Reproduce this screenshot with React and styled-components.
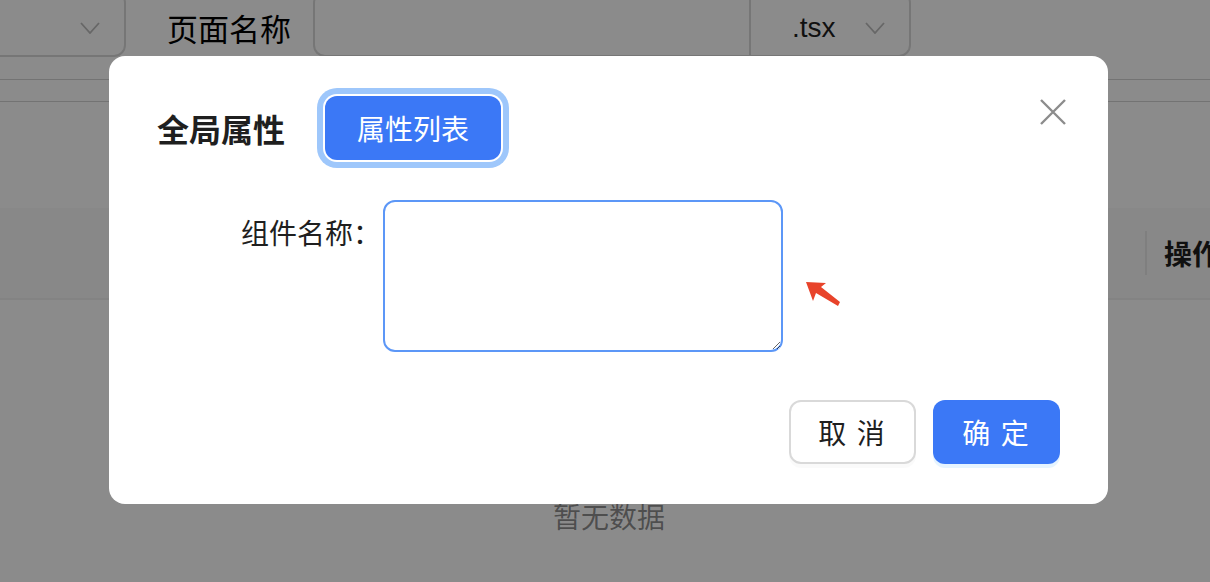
import styled, { createGlobalStyle } from "styled-components";

const GlobalStyle = createGlobalStyle`
  html, body {
    margin: 0;
    padding: 0;
    background: #fff;
    overflow: hidden;
  }
  body {
    font-family: "Liberation Sans", "Noto Sans CJK SC", sans-serif;
    color: #1f1f1f;
  }
  * { box-sizing: border-box; }
`;

const Page = styled.div`
  width: 1210px;
  height: 582px;
  overflow: hidden;
  position: relative;
  background: #fff;
`;

const TopBar = styled.div`
  display: flex;
  align-items: center;
  height: 66px;
  margin-top: -9px;
`;

const Select = styled.div`
  display: flex;
  align-items: center;
  justify-content: space-between;
  flex-shrink: 0;
  width: ${(p) => p.$width}px;
  height: 66px;
  margin-left: ${(p) => p.$offset || 0}px;
  padding: 0 24px 0 41px;
  border: 2px solid #d9d9d9;
  border-radius: ${(p) => (p.$attached ? "0 12px 12px 0" : "12px")};
  font-size: 28px;
  color: #1f1f1f;
  padding-top: 8px;
`;

const Chevron = ({ className }) => (
  <svg className={className} width="20" height="12" viewBox="0 0 20 12" fill="none">
    <path d="M1 1 L10 11 L19 1" stroke="#bdbdbd" strokeWidth="1.8" />
  </svg>
);

const PageLabel = styled.span`
  font-size: 31px;
  line-height: 40px;
  margin: 8px 22px 0 41px;
  color: #000;
  font-family: "Noto Sans CJK SC", sans-serif;
`;

const PageInput = styled.div`
  flex-shrink: 0;
  width: 436px;
  height: 66px;
  border: 2px solid #d9d9d9;
  border-right: none;
  border-radius: 12px 0 0 12px;
`;

const Rules = styled.div`
  margin-top: 22px;
  height: 23px;
  border-top: 1px solid #d4d4d4;
  border-bottom: 1px solid #d4d4d4;
`;

const TableHead = styled.div`
  margin-top: 106px;
  height: 92px;
  background: #fafafa;
  border-bottom: 2px solid #f0f0f0;
  display: flex;
  align-items: center;
  justify-content: flex-end;
`;

const HeadCell = styled.div`
  display: flex;
  align-items: center;
  height: 44px;
  padding-left: 17px;
  width: 65px;
  border-left: 2px solid #eaeaea;
  font-size: 28px;
  font-weight: 700;
  white-space: nowrap;
  overflow: hidden;
  font-family: "Noto Sans CJK SC", sans-serif;
`;

const Empty = styled.div`
  text-align: center;
  padding-top: 196px;
  font-size: 28px;
  line-height: 40px;
  color: rgba(0, 0, 0, 0.45);
  font-family: "Noto Sans CJK SC", sans-serif;
  padding-left: 8px;
`;

const Mask = styled.div`
  position: fixed;
  inset: 0;
  background: rgba(0, 0, 0, 0.455);
`;

const ModalWrap = styled.div`
  position: fixed;
  inset: 0;
  padding: 56px 0 0 109px;
`;

const Modal = styled.div`
  position: relative;
  width: 999px;
  background: #fff;
  border-radius: 16px;
  padding: 40px 48px 40px 48px;
  font-family: "Noto Sans CJK SC", sans-serif;
`;

const Header = styled.div`
  display: flex;
  align-items: center;
  gap: 40px;
  height: 64px;
`;

const Title = styled.h2`
  margin: 0;
  font-size: 32px;
  font-weight: 700;
  color: #1f1f1f;
  line-height: 44px;
`;

const TabButton = styled.button`
  height: 64px;
  padding: 0 32px;
  border: none;
  border-radius: 12px;
  background: #3b78f6;
  color: #fff;
  font-size: 28px;
  font-family: inherit;
  box-shadow: 0 0 0 2px #fff, 0 0 0 8px #9ec7fb;
`;

const Close = styled.button`
  position: absolute;
  top: 43px;
  right: 42px;
  width: 26px;
  height: 26px;
  padding: 0;
  border: none;
  background: none;
`;

const FormRow = styled.div`
  margin-top: 40px;
  display: grid;
  grid-template-columns: 224px 400px;
  column-gap: 2px;
  align-items: start;
`;

const Label = styled.label`
  text-align: right;
  font-size: 28px;
  line-height: 64px;
  color: #1f1f1f;
`;

const Field = styled.div`
  position: relative;
`;

const TextArea = styled.textarea`
  display: block;
  width: 400px;
  height: 152px;
  border: 2px solid #5c97f7;
  border-radius: 12px;
  outline: none;
  resize: both;
  font-size: 28px;
`;

const Arrow = styled.svg`
  position: absolute;
  left: 420px;
  top: 78px;
`;

const Footer = styled.div`
  margin-top: 48px;
  display: flex;
  justify-content: flex-end;
  gap: 17px;
`;

const Button = styled.button`
  width: 127px;
  height: 64px;
  border-radius: 12px;
  font-size: 28px;
  font-family: inherit;
  padding: 0;
  border: ${(p) => (p.$primary ? "none" : "2px solid #d9d9d9")};
  background: ${(p) => (p.$primary ? "#3b78f6" : "#fff")};
  color: ${(p) => (p.$primary ? "#fff" : "#1f1f1f")};
  box-shadow: ${(p) =>
    p.$primary ? "0 4px 0 rgba(5, 145, 255, 0.1)" : "0 4px 0 rgba(0, 0, 0, 0.02)"};
  letter-spacing: 2px;
`;

export default function App() {
  return (
    <>
      <GlobalStyle />
      <Page>
        <TopBar>
          <Select $width={160} $offset={-34}>
            <span />
            <Chevron />
          </Select>
          <PageLabel>页面名称</PageLabel>
          <PageInput />
          <Select $width={162} $attached>
            <span>.tsx</span>
            <Chevron />
          </Select>
        </TopBar>
        <Rules />
        <TableHead>
          <HeadCell>操作</HeadCell>
        </TableHead>
        <Empty>暂无数据</Empty>
      </Page>
      <Mask />
      <ModalWrap>
        <Modal>
          <Header>
            <Title>全局属性</Title>
            <TabButton>属性列表</TabButton>
          </Header>
          <Close aria-label="close">
            <svg width="26" height="26" viewBox="0 0 26 26">
              <path d="M1 1 L25 25 M25 1 L1 25" stroke="#8c8c8c" strokeWidth="2.4" />
            </svg>
          </Close>
          <FormRow>
            <Label>组件名称：</Label>
            <Field>
              <TextArea />
              <Arrow width="40" height="30" viewBox="0 0 40 30">
                <polygon
                  points="3,4 23,5 18,9 37,24 35,28 13,15 10,23"
                  fill="#e8432a"
                />
              </Arrow>
            </Field>
          </FormRow>
          <Footer>
            <Button>取 消</Button>
            <Button $primary>确 定</Button>
          </Footer>
        </Modal>
      </ModalWrap>
    </>
  );
}
